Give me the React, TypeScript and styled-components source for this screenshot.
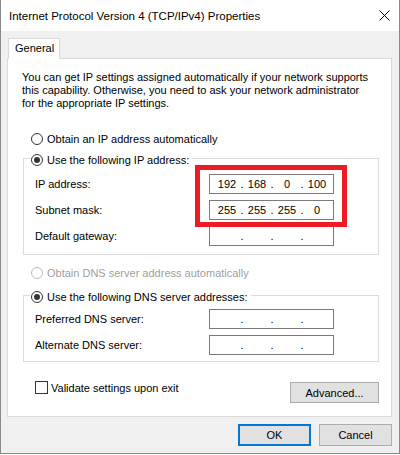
import React from "react";
import styled, { createGlobalStyle } from "styled-components";

const FONT = `"Liberation Sans", "Segoe UI", Arial, sans-serif`;

const Global = createGlobalStyle`
  html, body { margin: 0; padding: 0; background: #ffffff; }
  body { font-family: ${FONT}; font-size: 11px; color: #000; }
  * { box-sizing: border-box; }
`;

const Window = styled.div`
  width: 400px;
  height: 454px;
  display: flex;
  flex-direction: column;
  background: #f0f0f0;
  border: 1px solid #8a8a8a;
  border-top: none;
`;

const TitleBar = styled.div`
  height: 31px;
  flex: none;
  background: #ffffff;
  display: flex;
  align-items: center;
  justify-content: space-between;
  padding: 0 9px 0 8px;
`;

const Title = styled.span`
  font-size: 11.5px;
  white-space: nowrap;
`;

const Body = styled.div`
  flex: 1;
  display: flex;
  flex-direction: column;
  padding: 7px 7px 0 6px;
`;

const TabStrip = styled.div`
  display: flex;
  padding-left: 1px;
`;

const Tab = styled.div`
  position: relative;
  z-index: 1;
  width: 52px;
  height: 21px;
  margin-bottom: -1px;
  background: #ffffff;
  border: 1px solid #d9d9d9;
  border-bottom: none;
  padding-left: 6px;
  line-height: 19px;
`;

const Panel = styled.div`
  position: relative;
  width: 385px;
  height: 359px;
  background: #ffffff;
  border: 1px solid #d9d9d9;
  display: flex;
  flex-direction: column;
  padding-top: 12px;
`;

const Intro = styled.p`
  margin: 0 0 0 14px;
  line-height: 13px;
  white-space: nowrap;
`;

const OptionRow = styled.label<{ $top: number; $disabled?: boolean }>`
  display: flex;
  align-items: center;
  gap: 4px;
  height: 14px;
  margin: ${(p) => p.$top}px 0 0 23px;
  color: ${(p) => (p.$disabled ? "#a0a0a0" : "#000")};
  white-space: nowrap;
`;

const RadioDot = styled.span<{ $checked?: boolean; $disabled?: boolean }>`
  width: 12px;
  height: 12px;
  flex: none;
  border-radius: 50%;
  border: 1px solid ${(p) => (p.$disabled ? "#bcbcbc" : "#333333")};
  background: #ffffff;
  display: flex;
  align-items: center;
  justify-content: center;
  &::after {
    content: "";
    width: 6px;
    height: 6px;
    border-radius: 50%;
    background: #333333;
    display: ${(p) => (p.$checked ? "block" : "none")};
  }
`;

const GroupBox = styled.div<{ $top: number; $height: number }>`
  width: 356px;
  height: ${(p) => p.$height}px;
  margin: ${(p) => p.$top}px 0 0 15px;
  border: 1px solid #dcdcdc;
  display: flex;
  flex-direction: column;
`;

const Legend = styled.label`
  align-self: flex-start;
  display: flex;
  align-items: center;
  gap: 4px;
  height: 14px;
  margin: -6px 0 0 6px;
  padding: 0 3px 0 1px;
  background: #ffffff;
  white-space: nowrap;
`;

const Fields = styled.div<{ $top: number }>`
  display: flex;
  flex-direction: column;
  gap: 6px;
  margin-top: ${(p) => p.$top}px;
`;

const FieldRow = styled.div`
  display: grid;
  grid-template-columns: 185px 125px;
  align-items: center;
  height: 20px;
`;

const FieldLabel = styled.span`
  padding-left: 11px;
  white-space: nowrap;
`;

const IpBox = styled.div`
  width: 125px;
  height: 20px;
  border: 1px solid #7a7a7a;
  background: #ffffff;
  display: flex;
  align-items: center;
  padding-left: 5px;
`;

const Octet = styled.span`
  width: 24px;
  text-align: center;
`;

const Dot = styled.span`
  width: 6px;
  text-align: center;
`;

const Highlight = styled.div`
  position: absolute;
  left: 187px;
  top: 106px;
  width: 152px;
  height: 62px;
  border: 5px solid #ed1c24;
  pointer-events: none;
`;

const FooterRow = styled.div`
  display: flex;
  justify-content: space-between;
  align-items: flex-start;
  margin: 19px 12px 0 27px;
`;

const CheckRow = styled.label`
  display: flex;
  align-items: center;
  gap: 3px;
  height: 13px;
  white-space: nowrap;
`;

const CheckBox = styled.span`
  width: 13px;
  height: 13px;
  flex: none;
  border: 1px solid #333333;
  background: #ffffff;
`;

const Button = styled.button<{ $width: number; $height: number; $default?: boolean; $top?: number }>`
  width: ${(p) => p.$width}px;
  height: ${(p) => p.$height}px;
  margin-top: ${(p) => p.$top ?? 0}px;
  background: #e1e1e1;
  border: ${(p) => (p.$default ? "2px solid #0078d7" : "1px solid #adadad")};
  font-family: ${FONT};
  font-size: 11px;
  color: #000;
  padding: 0;
`;

const ButtonBar = styled.div`
  display: flex;
  justify-content: flex-end;
  gap: 8px;
  margin-top: 7px;
`;

const CloseIcon = () => (
  <svg width="11" height="11" viewBox="0 0 11 11">
    <path d="M0.5 0.5 L10.5 10.5 M10.5 0.5 L0.5 10.5" stroke="#000" strokeWidth="1" fill="none" />
  </svg>
);

const IpField = ({ value }: { value?: string[] }) => {
  const parts = value ?? ["", "", "", ""];
  return (
    <IpBox>
      {parts.map((p, i) => (
        <React.Fragment key={i}>
          <Octet>{p}</Octet>
          {i < 3 && <Dot>.</Dot>}
        </React.Fragment>
      ))}
    </IpBox>
  );
};

export default function App() {
  return (
    <>
      <Global />
      <Window>
        <TitleBar>
          <Title>Internet Protocol Version 4 (TCP/IPv4) Properties</Title>
          <CloseIcon />
        </TitleBar>
        <Body>
          <TabStrip>
            <Tab>General</Tab>
          </TabStrip>
          <Panel>
            <Intro>
              You can get IP settings assigned automatically if your network supports
              <br />
              this capability. Otherwise, you need to ask your network administrator
              <br />
              for the appropriate IP settings.
            </Intro>
            <OptionRow $top={22}>
              <RadioDot />
              Obtain an IP address automatically
            </OptionRow>
            <GroupBox $top={12} $height={97}>
              <Legend>
                <RadioDot $checked />
                Use the following IP address:
              </Legend>
              <Fields $top={7}>
                <FieldRow>
                  <FieldLabel>IP address:</FieldLabel>
                  <IpField value={["192", "168", "0", "100"]} />
                </FieldRow>
                <FieldRow>
                  <FieldLabel>Subnet mask:</FieldLabel>
                  <IpField value={["255", "255", "255", "0"]} />
                </FieldRow>
                <FieldRow>
                  <FieldLabel>Default gateway:</FieldLabel>
                  <IpField />
                </FieldRow>
              </Fields>
            </GroupBox>
            <OptionRow $top={11} $disabled>
              <RadioDot $disabled />
              Obtain DNS server address automatically
            </OptionRow>
            <GroupBox $top={15} $height={67}>
              <Legend>
                <RadioDot $checked />
                Use the following DNS server addresses:
              </Legend>
              <Fields $top={5}>
                <FieldRow>
                  <FieldLabel>Preferred DNS server:</FieldLabel>
                  <IpField />
                </FieldRow>
                <FieldRow>
                  <FieldLabel>Alternate DNS server:</FieldLabel>
                  <IpField />
                </FieldRow>
              </Fields>
            </GroupBox>
            <FooterRow>
              <CheckRow>
                <CheckBox />
                Validate settings upon exit
              </CheckRow>
              <Button $width={89} $height={21} $top={1}>Advanced...</Button>
            </FooterRow>
            <Highlight />
          </Panel>
          <ButtonBar>
            <Button $width={73} $height={22} $default>OK</Button>
            <Button $width={73} $height={22}>Cancel</Button>
          </ButtonBar>
        </Body>
      </Window>
    </>
  );
}
